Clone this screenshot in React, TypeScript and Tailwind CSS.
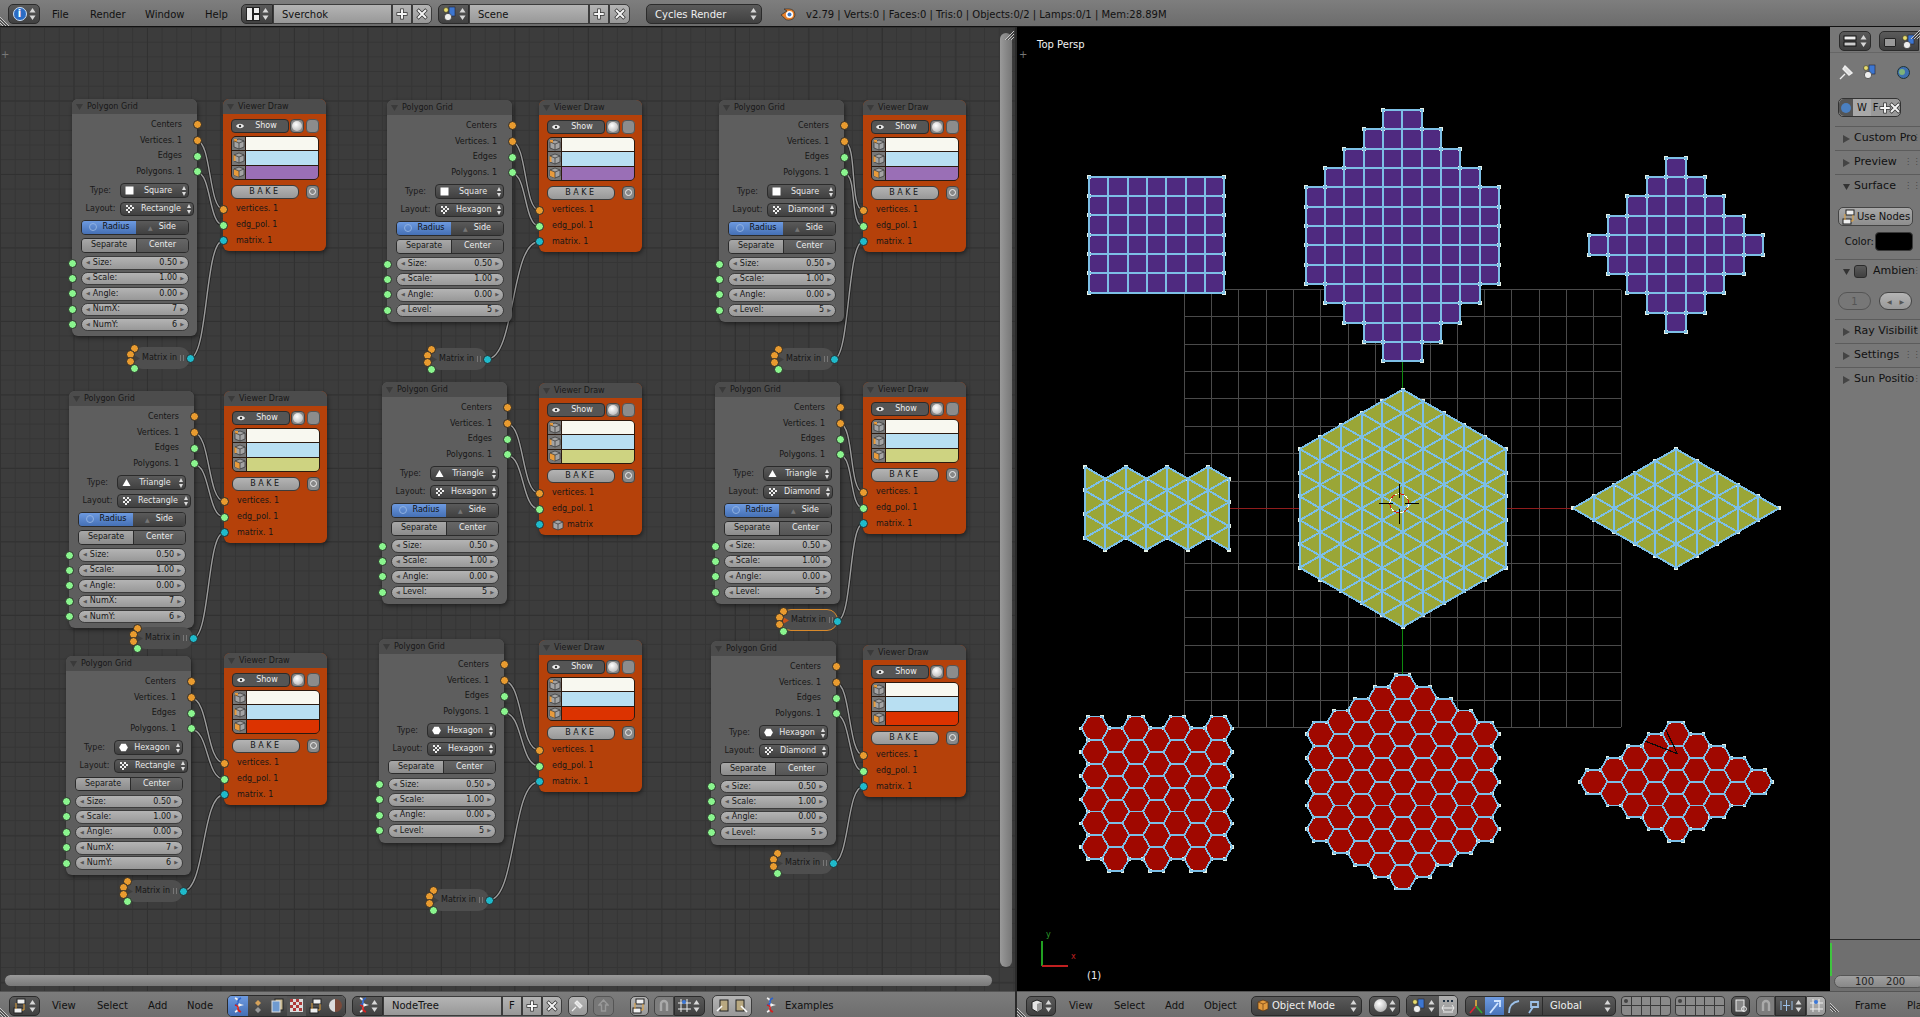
import type { ReactNode } from "react";

// ---------- small helpers ----------
const hexPts = (cx: number, cy: number, r = 13.72) =>
  [0, 60, 120, 180, 240, 300]
    .map((a) => `${(cx + r * Math.cos((a * Math.PI) / 180)).toFixed(1)},${(cy + r * Math.sin((a * Math.PI) / 180)).toFixed(1)}`)
    .join(" ");

function Arrows({ light = true }: { light?: boolean }) {
  const c = light ? "#d8d8d8" : "#333";
  return (
    <svg width="7" height="14" viewBox="0 0 7 14" className="shrink-0">
      <path d="M3.5 1 L6.5 5.5 H0.5 Z" fill={c} />
      <path d="M3.5 13 L6.5 8.5 H0.5 Z" fill={c} />
    </svg>
  );
}

function Corner({ flip = false }: { flip?: boolean }) {
  return (
    <svg width="12" height="12" viewBox="0 0 12 12" className={`shrink-0 ${flip ? "-scale-x-100" : ""}`}>
      <path d="M0 3 L9 12 M0 6 L6 12 M0 9 L3 12" stroke="#c8c8c8" strokeWidth="1" />
      <path d="M0 4.5 L7.5 12 M0 7.5 L4.5 12" stroke="#3a3a3a" strokeWidth="1" />
    </svg>
  );
}

function Plus() {
  return (
    <svg width="14" height="14" viewBox="0 0 14 14" className="shrink-0">
      <path d="M7 1.5 V12.5 M1.5 7 H12.5" stroke="#333" strokeWidth="3.4" />
      <path d="M7 2.2 V11.8 M2.2 7 H11.8" stroke="#f4f4f4" strokeWidth="2" />
    </svg>
  );
}

function Cross() {
  return (
    <svg width="14" height="14" viewBox="0 0 14 14" className="shrink-0">
      <path d="M2.5 2.5 L11.5 11.5 M11.5 2.5 L2.5 11.5" stroke="#333" strokeWidth="3.4" />
      <path d="M3 3 L11 11 M11 3 L3 11" stroke="#f4f4f4" strokeWidth="2" />
    </svg>
  );
}

function TreeIcon() {
  return (
    <svg width="12" height="17" viewBox="0 0 12 17">
      <path d="M3 1 C10 4 2 6 9 8 C2 10 10 12 3 15" stroke="#f2f2f2" strokeWidth="1.8" fill="none" />
      <path d="M9 1 C2 4 10 6 3 8" stroke="#2d62c8" strokeWidth="1.8" fill="none" />
      <path d="M3 8 C10 10 2 12 9 15" stroke="#d22222" strokeWidth="1.8" fill="none" />
    </svg>
  );
}

function NodesIcon() {
  return (
    <svg width="14" height="16" viewBox="0 0 14 16" className="shrink-0">
      <rect x="4" y="1" width="8" height="5" fill="#eee" stroke="#222" />
      <rect x="1" y="10" width="8" height="5" fill="#eee" stroke="#222" />
      <path d="M3 5 V11 M11 6 V12 H9" stroke="#e3a23b" fill="none" />
    </svg>
  );
}

function SceneIcon() {
  return (
    <svg width="15" height="16" viewBox="0 0 15 16" className="shrink-0">
      <rect x="7" y="1" width="6" height="9" fill="#3d76d0" stroke="#223" strokeWidth="0.6" />
      <circle cx="4" cy="4" r="2.4" fill="#e8dc70" stroke="#332" strokeWidth="0.6" />
      <circle cx="6" cy="11" r="3.6" fill="#eee" stroke="#222" strokeWidth="0.6" />
    </svg>
  );
}

// gray cube, a different facet picked out in orange on each row
function Cube({ facet = -1 }: { facet?: number }) {
  return (
    <svg width="12" height="12" viewBox="0 0 12 12">
      <path d="M6 1 L11 3 V9 L6 11 L1 9 V3 Z" fill="#a4a4a4" stroke="#333" strokeWidth="0.7" />
      {facet === 0 && <path d="M1 1 H4 V4 H1 Z" fill="#e89b3c" />}
      {facet === 1 && <path d="M0.5 3 H2.5 V9 H0.5 Z" fill="#e89b3c" />}
      {facet === 2 && <path d="M1 3 L6 5 V11 L1 9 Z" fill="#e89b3c" />}
      <path d="M1 3 L6 5 L11 3 M6 5 V11" stroke="#333" strokeWidth="0.7" fill="none" />
    </svg>
  );
}

const darkPill = "bg-gradient-to-b from-[#5a5a5a] to-[#404040] border border-[#2b2b2b]";
const lightPill = "bg-gradient-to-b from-[#b4b4b4] to-[#989898] border border-[#3c3c3c]";

function BarIcon({ children, w = 20, cls = "" }: { children?: ReactNode; w?: number; cls?: string }) {
  return (
    <div className={`h-[20px] flex items-center justify-center shrink-0 ${cls}`} style={{ width: w }}>
      {children}
    </div>
  );
}

function MenuItem({ label, w }: { label: string; w: number }) {
  return (
    <span className="text-[10px] text-[#111] shrink-0" style={{ width: w }}>
      {label}
    </span>
  );
}

// ---------- node editor ----------
type Poly = {
  x: number;
  y: number;
  kind: "Square" | "Triangle" | "Hexagon";
  layout: "Rectangle" | "Hexagon" | "Diamond";
  vx: number;
  vy: number;
  mx?: number;
  my?: number;
  sel?: boolean;
};

const NODES: Poly[] = [
  { x: 72, y: 99, kind: "Square", layout: "Rectangle", vx: 223, vy: 99, mx: 190, my: 358 },
  { x: 387, y: 100, kind: "Square", layout: "Hexagon", vx: 539, vy: 100, mx: 487, my: 359 },
  { x: 719, y: 100, kind: "Square", layout: "Diamond", vx: 863, vy: 100, mx: 834, my: 359 },
  { x: 69, y: 391, kind: "Triangle", layout: "Rectangle", vx: 224, vy: 391, mx: 193, my: 638 },
  { x: 382, y: 382, kind: "Triangle", layout: "Hexagon", vx: 539, vy: 383 },
  { x: 715, y: 382, kind: "Triangle", layout: "Diamond", vx: 863, vy: 382, mx: 838, my: 620, sel: true },
  { x: 66, y: 656, kind: "Hexagon", layout: "Rectangle", vx: 224, vy: 653, mx: 183, my: 891 },
  { x: 379, y: 639, kind: "Hexagon", layout: "Hexagon", vx: 539, vy: 640, mx: 489, my: 900 },
  { x: 711, y: 641, kind: "Hexagon", layout: "Diamond", vx: 863, vy: 645, mx: 833, my: 863 },
];

const THIRD = { Square: "bg-[#9a6fb6]", Triangle: "bg-[#ced381]", Hexagon: "bg-[#dc3300]" };

function Socket({ color, cls = "" }: { color: string; cls?: string }) {
  return <span className={`absolute w-[9px] h-[9px] rounded-full border border-[#2a2a2a] ${color} ${cls}`} />;
}
const ORANGE = "bg-[#e99b2f]";
const GREEN = "bg-[#8af58e]";
const CYAN = "bg-[#1fbacb]";

function TypeGlyph({ kind }: { kind: Poly["kind"] }) {
  return (
    <svg width="9" height="9" viewBox="0 0 9 9" className="shrink-0">
      {kind === "Square" && <rect x="0.5" y="0.5" width="8" height="8" fill="#fff" />}
      {kind === "Triangle" && <path d="M4.5 1 L8.5 8 H0.5 Z" fill="#fff" />}
      {kind === "Hexagon" && <polygon points={hexPts(4.5, 4.5, 4.4)} fill="#fff" />}
    </svg>
  );
}

function LayoutGlyph() {
  return (
    <svg width="10" height="9" viewBox="0 0 10 9" className="shrink-0">
      <path d="M1 1h2v2H1zM5 1h2v2H5zM3 3h2v2H3zM7 3h2v2H7zM1 5h2v2H1zM5 5h2v2H5zM3 7h2v2H3z" fill="#eee" />
    </svg>
  );
}

function Field({ label, value }: { label: string; value: string }) {
  return (
    <div className="relative h-[13.5px]">
      <Socket color={GREEN} cls="left-[-13.5px] top-[2.2px]" />
      <div className={`h-full rounded-[7px] flex items-center justify-between pl-[4px] pr-[4px] text-[8px] text-[#161616] ${lightPill}`}>
        <span className="flex items-center gap-[3px]">
          <span className="text-[5px] text-[#555]">◀</span>
          {label}
        </span>
        <span className="flex items-center gap-[3px]">
          {value}
          <span className="text-[5px] text-[#555]">▶</span>
        </span>
      </div>
    </div>
  );
}

function DropRow({ label, value, icon }: { label: string; value: string; icon: ReactNode }) {
  return (
    <div className="flex items-center h-[14.5px]">
      <span className="w-[39px] text-center text-[8px] text-[#1a1a1a] shrink-0">{label}</span>
      <div className={`flex-1 h-full rounded-[4px] flex items-center pl-[4px] pr-[2px] gap-[6px] text-[8px] text-[#e8e8e8] ${darkPill}`}>
        {icon}
        <span className="flex-1 text-center whitespace-nowrap">{value}</span>
        <svg width="4" height="10" viewBox="0 0 4 10" className="shrink-0">
          <path d="M2 0 L4 4 H0 Z M2 10 L4 6 H0 Z" fill="#ddd" />
        </svg>
      </div>
    </div>
  );
}

function NodeTitle({ title }: { title: string }) {
  return (
    <div className="h-[15px] flex items-center pl-[4px] gap-[4px] text-[8px] text-[#181818] bg-[#4c4c4c] rounded-t-[6px]">
      <svg width="7" height="6" viewBox="0 0 7 6">
        <path d="M0 0 H7 L3.5 6 Z" fill="#3a3a3a" />
      </svg>
      {title}
    </div>
  );
}

function PolyNode({ n }: { n: Poly }) {
  const fields =
    n.layout === "Rectangle"
      ? [["Size:", "0.50"], ["Scale:", "1.00"], ["Angle:", "0.00"], ["NumX:", "7"], ["NumY:", "6"]]
      : [["Size:", "0.50"], ["Scale:", "1.00"], ["Angle:", "0.00"], ["Level:", "5"]];
  const outs = ["Centers", "Vertices. 1", "Edges", "Polygons. 1"];
  return (
    <div
      className="absolute w-[125px] rounded-[6px] bg-[#5e5e5e] shadow-[1px_2px_4px_rgba(0,0,0,0.45)]"
      style={{ left: n.x, top: n.y - 27 }}
    >
      <NodeTitle title="Polygon Grid" />
      <div className="pt-[3px]">
        {outs.map((o, i) => (
          <div key={o} className="relative h-[15.7px] flex items-center justify-end pr-[15px] text-[8px] text-[#161616]">
            {o}
            <Socket color={i < 2 ? ORANGE : GREEN} cls="right-[-4.5px] top-[3.3px]" />
          </div>
        ))}
      </div>
      <div className="pl-[9px] pr-[8px] pb-[5px] pt-[3.5px] flex flex-col">
        <DropRow label="Type:" value={n.kind} icon={<TypeGlyph kind={n.kind} />} />
        <div className="mt-[3.8px]">
          <DropRow label="Layout:" value={n.layout} icon={<LayoutGlyph />} />
        </div>
        {n.kind !== "Hexagon" && (
          <div className="mt-[4px] h-[14.5px] flex rounded-[4px] overflow-hidden border border-[#2b2b2b] text-[8px]">
            <div className="w-[54px] flex items-center justify-center gap-[6px] bg-gradient-to-b from-[#6d9ae0] to-[#4570b5] text-[#111]">
              <span className="w-[8px] h-[8px] rounded-full border border-[#8fb0e0]" />
              Radius
            </div>
            <div className="flex-1 flex items-center justify-center gap-[6px] bg-gradient-to-b from-[#5a5a5a] to-[#404040] text-[#eee]">
              <span className="text-[6px] text-[#777]">▲</span>
              Side
            </div>
          </div>
        )}
        <div className="mt-[3.5px] h-[14.5px] flex rounded-[4px] overflow-hidden border border-[#2b2b2b] text-[8px]">
          <div className="w-[54px] flex items-center justify-center bg-gradient-to-b from-[#a8a8a8] to-[#8c8c8c] text-[#161616]">
            Separate
          </div>
          <div className="flex-1 flex items-center justify-center bg-gradient-to-b from-[#666] to-[#555] text-[#eee] border-l border-[#2b2b2b]">
            Center
          </div>
        </div>
        <div className="mt-[3.8px] flex flex-col gap-[1.9px]">
          {fields.map(([a, b]) => (
            <Field key={a} label={a} value={b} />
          ))}
        </div>
      </div>
    </div>
  );
}

function ViewerNode({ n }: { n: Poly }) {
  const linked = n.mx !== undefined;
  const rows: [string, string][] = [
    ["vertices. 1", ORANGE],
    ["edg_pol. 1", GREEN],
    [linked ? "matrix. 1" : "matrix", CYAN],
  ];
  return (
    <div
      className="absolute w-[103px] rounded-[6px] bg-[#b5410a] shadow-[1px_2px_4px_rgba(0,0,0,0.45)]"
      style={{ left: n.vx, top: n.vy - 27 }}
    >
      <NodeTitle title="Viewer Draw" />
      <div className="pl-[8px] pr-[7px] pt-[5px]">
        <div className="flex gap-[1px] h-[14px]">
          <div className="w-[58px] rounded-[4px] bg-[#555] border border-[#2b2b2b] flex items-center pl-[4px] text-[8px] text-[#eee]">
            <svg width="8" height="6" viewBox="0 0 8 6">
              <path d="M0 3 C2 0 6 0 8 3 C6 6 2 6 0 3Z" fill="#eee" />
              <circle cx="4" cy="3" r="1.2" fill="#333" />
            </svg>
            <span className="flex-1 text-center">Show</span>
          </div>
          <div className="w-[14px] rounded-[4px] bg-[#888] border border-[#444] flex items-center justify-center">
            <span className="w-[10px] h-[10px] rounded-full bg-[radial-gradient(circle_at_40%_35%,#fff,#aaa)]" />
          </div>
          <div className="w-[13px] ml-[1px] rounded-[4px] bg-[#8c8c8c] border border-[#555]" />
        </div>
        <div className="mt-[3px] h-[44px] rounded-[5px] overflow-hidden border border-[#2b1a10] flex flex-col gap-[1px] bg-[#2b1a10]">
          {["bg-[#f8f8f0]", "bg-[#b8dff2]", THIRD[n.kind]].map((c, i) => (
            <div key={c} className="flex-1 flex gap-[1px]">
              <div className="w-[13px] bg-[#777] flex items-center justify-center">
                <Cube facet={i} />
              </div>
              <div className={`flex-1 ${c}`} />
            </div>
          ))}
        </div>
        <div className="mt-[5px] flex justify-between h-[13.5px]">
          <div className={`w-[68px] rounded-[6px] flex items-center justify-center text-[8px] tracking-[2.5px] text-[#161616] ${lightPill}`}>
            BAKE
          </div>
          <div className="w-[13px] rounded-[4px] bg-[#888] border border-[#444] flex items-center justify-center">
            <span className="w-[7px] h-[7px] rounded-full border border-[#eee]" />
          </div>
        </div>
      </div>
      <div className="pt-[3px] pb-[2px]">
        {rows.map(([t, c]) => (
          <div key={t} className="relative h-[15.8px] flex items-center pl-[13px] text-[8px] text-[#161616]">
            <Socket color={c} cls="left-[-4.5px] top-[3.4px]" />
            {t === "matrix" && (
              <span className="mr-[3px]">
                <Cube />
              </span>
            )}
            {t}
          </div>
        ))}
      </div>
    </div>
  );
}

function MatrixNode({ n }: { n: Poly }) {
  return (
    <div
      className={`absolute w-[58px] h-[22px] rounded-[11px] bg-[#4e4e4e] flex items-center pl-[2px] text-[8px] text-[#161616] ${n.sel ? "border border-[#d98a2b]" : ""}`}
      style={{ left: n.mx! - 58, top: n.my! - 38 }}
    >
      <svg width="6" height="7" viewBox="0 0 6 7" className="mr-[2px] shrink-0">
        <path d="M0 0 L6 3.5 L0 7 Z" fill={n.sel ? "#c7541a" : "#3f3f3f"} />
      </svg>
      <span className="whitespace-nowrap">Matrix in</span>
      <span className="ml-[3px] w-[4px] h-[6px] border-x border-[#777] shrink-0" />
      <Socket color={ORANGE} cls="left-[-2px] top-[-3px]" />
      <Socket color={ORANGE} cls="left-[-6px] top-[3px]" />
      <Socket color={ORANGE} cls="left-[-6px] top-[10px]" />
      <Socket color={GREEN} cls="left-[-2px] top-[17px]" />
      <Socket color={CYAN} cls="right-[-4.5px] top-[6.5px]" />
    </div>
  );
}

function wire(x1: number, y1: number, x2: number, y2: number) {
  const d = Math.max(Math.abs(x2 - x1) * 0.55, 14);
  return `M${x1} ${y1} C${x1 + d} ${y1} ${x2 - d} ${y2} ${x2} ${y2}`;
}

function Wires() {
  const paths: string[] = [];
  NODES.forEach((n) => {
    paths.push(wire(n.x + 125, n.y + 42, n.vx, n.vy + 110));
    paths.push(wire(n.x + 125, n.y + 73.5, n.vx, n.vy + 126));
    if (n.mx !== undefined) paths.push(wire(n.mx, n.my!, n.vx, n.vy + 141.7));
  });
  return (
    <svg className="absolute inset-0 w-full h-full" viewBox="0 27 1015 964">
      {paths.map((d, i) => (
        <path key={i} d={d} fill="none" stroke="#222" strokeWidth="3.2" />
      ))}
      {paths.map((d, i) => (
        <path key={i} d={d} fill="none" stroke="#9c9c9c" strokeWidth="1.4" />
      ))}
    </svg>
  );
}

function NodeEditor() {
  return (
    <div className="relative flex-1 overflow-hidden bg-[#3c3c3c] bg-[linear-gradient(#313131_1px,transparent_1px),linear-gradient(90deg,#313131_1px,transparent_1px),linear-gradient(#353535_1px,transparent_1px),linear-gradient(90deg,#353535_1px,transparent_1px)] bg-[size:73.5px_73.5px,73.5px_73.5px,14.7px_14.7px,14.7px_14.7px]">
      <Wires />
      {NODES.map((n, i) => (
        <div key={i}>
          <PolyNode n={n} />
          <ViewerNode n={n} />
          {n.mx !== undefined && <MatrixNode n={n} />}
        </div>
      ))}
      <span className="absolute left-[1px] top-[23px] text-[10px] leading-none text-[#777]">+</span>
      <div className="absolute right-[3px] top-[6px] bottom-[24px] w-[12px] rounded-[6px] bg-gradient-to-r from-[#9a9a9a] to-[#777]" />
      <div className="absolute left-[5px] right-[23px] bottom-[5px] h-[11px] rounded-[6px] bg-gradient-to-b from-[#9a9a9a] to-[#787878]" />
      <div className="absolute right-[1px] top-[1px]">
        <Corner flip />
      </div>
    </div>
  );
}

function NodeHeader() {
  return (
    <div className="h-[26px] relative flex items-center pl-[9px] pt-[2px] border-t border-[#555] bg-gradient-to-b from-[#7c7c7c] to-[#6e6e6e]">
      <div className="absolute left-0 bottom-0">
        <Corner />
      </div>
      <BarIcon w={31} cls={`rounded-[5px] gap-[2px] ${darkPill}`}>
        <NodesIcon />
        <Arrows />
      </BarIcon>
      <span className="w-[12px]" />
      <MenuItem label="View" w={45} />
      <MenuItem label="Select" w={51} />
      <MenuItem label="Add" w={39} />
      <MenuItem label="Node" w={40} />
      <div className="flex rounded-[5px] overflow-hidden border border-[#2b2b2b]">
        <BarIcon w={20} cls="bg-gradient-to-b from-[#6d9ae0] to-[#4570b5]">
          <TreeIcon />
        </BarIcon>
        <BarIcon w={19.4} cls="bg-gradient-to-b from-[#5a5a5a] to-[#404040]">
          <svg width="12" height="14" viewBox="0 0 12 14">
            <path d="M6 1 L9 4 L6 7 L3 4 Z" fill="#d5a25a" />
            <path d="M6 8 L9 11 L6 14 L3 11 Z" fill="#999" />
          </svg>
        </BarIcon>
        <BarIcon w={19.4} cls="bg-gradient-to-b from-[#5a5a5a] to-[#404040]">
          <svg width="13" height="15" viewBox="0 0 13 15">
            <rect x="4" y="1" width="8" height="11" fill="#c8b890" stroke="#222" />
            <rect x="1" y="3" width="8" height="11" fill="#6f9ad0" stroke="#ddd" />
          </svg>
        </BarIcon>
        <BarIcon w={19.4} cls="bg-[#555]">
          <svg width="13" height="13" viewBox="0 0 13 13">
            <rect width="13" height="13" fill="#ddd" />
            <path d="M0 0h3v3H0zM6 0h3v3H6zM3 3h3v3H3zM9 3h3v3H9zM0 6h3v3H0zM6 6h3v3H6zM3 9h3v3H3zM9 9h3v3H9z" fill="#b03a3a" />
          </svg>
        </BarIcon>
        <BarIcon w={19.4} cls="bg-gradient-to-b from-[#5a5a5a] to-[#404040]">
          <NodesIcon />
        </BarIcon>
        <BarIcon w={19.4} cls="bg-gradient-to-b from-[#5a5a5a] to-[#404040]">
          <span className="w-[13px] h-[13px] rounded-full bg-[linear-gradient(90deg,#ddd_50%,#7a4a3a_50%)]" />
        </BarIcon>
      </div>
      <span className="w-[6px]" />
      <BarIcon w={31} cls={`rounded-l-[5px] gap-[2px] ${darkPill}`}>
        <TreeIcon />
        <Arrows />
      </BarIcon>
      <div className={`w-[119px] h-[20px] flex items-center pl-[8px] text-[10px] text-[#111] ${lightPill}`}>NodeTree</div>
      <BarIcon w={20} cls={`text-[10px] text-[#111] ${lightPill}`}>F</BarIcon>
      <BarIcon w={20} cls={lightPill}><Plus /></BarIcon>
      <BarIcon w={20} cls={`rounded-r-[5px] ${lightPill}`}><Cross /></BarIcon>
      <span className="w-[6px]" />
      <BarIcon w={20} cls={`rounded-[5px] ${lightPill}`}>
        <svg width="13" height="13" viewBox="0 0 13 13">
          <path d="M1 12 L5 8 M4 4 L9 9 M6 2 L11 7 L9 9 L4 4 Z" stroke="#eee" fill="#ddd" strokeWidth="1.2" />
        </svg>
      </BarIcon>
      <span className="w-[5px]" />
      <BarIcon w={21} cls="rounded-[5px] bg-[#777] border border-[#555]">
        <svg width="11" height="13" viewBox="0 0 11 13">
          <path d="M5.5 1 L10 6 H7.5 V12 H3.5 V6 H1 Z" stroke="#999" fill="none" strokeWidth="1.4" />
        </svg>
      </BarIcon>
      <span className="w-[16px]" />
      <BarIcon w={19} cls={`rounded-[5px] ${lightPill}`}>
        <NodesIcon />
      </BarIcon>
      <span className="w-[5px]" />
      <BarIcon w={20} cls="rounded-l-[5px] bg-[#7d7d7d] border border-[#444]">
        <svg width="12" height="13" viewBox="0 0 12 13">
          <path d="M3 12 V5 A3 3 0 0 1 9 5 V12" stroke="#aaa" strokeWidth="2.4" fill="none" />
        </svg>
      </BarIcon>
      <BarIcon w={31} cls={`rounded-r-[5px] gap-[2px] ${darkPill}`}>
        <svg width="13" height="13" viewBox="0 0 13 13">
          <path d="M3 0 V13 M9 0 V13 M0 4 H13 M0 10 H13" stroke="#eee" />
          <circle cx="6" cy="3" r="2" fill="#3b78d8" />
        </svg>
        <Arrows />
      </BarIcon>
      <span className="w-[7px]" />
      <div className={`flex rounded-[5px] overflow-hidden ${lightPill}`}>
        <BarIcon w={19}>
          <svg width="13" height="15" viewBox="0 0 13 15">
            <rect x="4" y="2" width="8" height="11" fill="#b8a880" stroke="#222" />
            <path d="M1 13 L6 8" stroke="#fff" strokeWidth="1.6" />
          </svg>
        </BarIcon>
        <BarIcon w={19}>
          <svg width="13" height="15" viewBox="0 0 13 15">
            <rect x="1" y="2" width="8" height="11" fill="#b8a880" stroke="#222" />
            <path d="M6 8 L12 14" stroke="#fff" strokeWidth="1.6" />
          </svg>
        </BarIcon>
      </div>
      <span className="w-[11px]" />
      <span className="w-[14px] flex justify-center"><TreeIcon /></span>
      <span className="w-[8px]" />
      <span className="text-[10px] text-[#111]">Examples</span>
    </div>
  );
}

// ---------- 3D view ----------
type V = { c: number; k: number };

function triMesh(verts: V[], X: number, Y: number) {
  const has = new Set(verts.map((v) => `${v.c}:${v.k}`));
  const p = (v: V) => [X + v.c * 20.59, Y + v.k * 11.875] as const;
  const lines: [number, number, number, number][] = [];
  verts.forEach((v) => {
    [[0, 2], [1, 1], [1, -1]].forEach(([dc, dk]) => {
      if (has.has(`${v.c + dc}:${v.k + dk}`)) {
        const a = p(v);
        const b = p({ c: v.c + dc, k: v.k + dk });
        lines.push([a[0], a[1], b[0], b[1]]);
      }
    });
  });
  // only vertices on the rim stand out of the blue wires
  const rim = verts.filter((v) =>
    [[0, 2], [0, -2], [1, 1], [1, -1], [-1, 1], [-1, -1]].some(([dc, dk]) => !has.has(`${v.c + dc}:${v.k + dk}`)),
  );
  return { lines, pts: rim.map(p) };
}

function range(a: number, b: number, s = 1) {
  const out: number[] = [];
  for (let i = a; i <= b; i += s) out.push(i);
  return out;
}

function Mesh({ fill, outline, verts, X, Y }: { fill: string; outline: string; verts: V[]; X: number; Y: number }) {
  const m = triMesh(verts, X, Y);
  return (
    <g>
      <polygon points={outline} fill={fill} />
      {m.pts.map(([x, y], i) => (
        <rect key={i} x={x - 2} y={y - 2} width="4" height="4" fill="#e6f2e8" />
      ))}
      {m.lines.map(([a, b, c, d], i) => (
        <line key={i} x1={a} y1={b} x2={c} y2={d} stroke="#7dbfe6" strokeWidth="2" />
      ))}
    </g>
  );
}

function Squares({ rows, x0, y0, cell }: { rows: [number, number][]; x0: number; y0: number; cell: number }) {
  // each row: first column index and number of cells
  return (
    <g>
      {rows.map(([s, n], r) => (
        <rect key={r} x={x0 + s * cell} y={y0 + r * cell} width={n * cell} height={cell} fill="#4f2a80" />
      ))}
      {rows.map(([s, n], r) =>
        [0, n].flatMap((c) =>
          [0, 1].map((d) => (
            <rect key={`${r}-${c}-${d}`} x={x0 + (s + c) * cell - 2} y={y0 + (r + d) * cell - 2} width="4" height="4" fill="#e6f2e8" />
          )),
        ),
      )}
      {rows.map(([s, n], r) =>
        range(0, n - 1).map((c) => (
          <rect key={`${r}:${c}`} x={x0 + (s + c) * cell} y={y0 + r * cell} width={cell} height={cell} fill="none" stroke="#7dbfe6" strokeWidth="2" />
        )),
      )}
    </g>
  );
}

function HexCells({ cells }: { cells: [number, number][] }) {
  const R = 13.72;
  const corners = cells.flatMap(([x, y]) =>
    [0, 60, 120, 180, 240, 300].map((a) => [x + R * Math.cos((a * Math.PI) / 180), y + R * Math.sin((a * Math.PI) / 180)] as const),
  );
  // a corner shared by three cells sits inside the patch and shows no vertex
  const rim = corners.filter(([x, y]) => cells.filter(([a, b]) => Math.hypot(a - x, b - y) < R + 1).length < 3);
  return (
    <g>
      {cells.map(([x, y], i) => (
        <polygon key={i} points={hexPts(x, y)} fill="#a00800" />
      ))}
      {rim.map(([x, y], i) => (
        <rect key={i} x={x - 1.8} y={y - 1.8} width="3.6" height="3.6" fill="#e6f2e8" />
      ))}
      {cells.map(([x, y], i) => (
        <polygon key={i} points={hexPts(x, y)} fill="none" stroke="#7dbfe6" strokeWidth="1.8" />
      ))}
    </g>
  );
}

function Viewport() {
  const gx = range(0, 16).map((i) => 1184.3 + i * 27.3);
  const gy = range(0, 16).map((i) => 289.5 + i * 27.37);

  const rectRows: [number, number][] = range(0, 5).map(() => [0, 7]);
  const roundRows: [number, number][] = [2, 4, 6, 8, 10, 10, 10, 10, 10, 8, 6, 4, 2].map((n) => [(10 - n) / 2, n]);
  const diamondRows: [number, number][] = [1, 3, 5, 7, 9, 7, 5, 3, 1].map((n) => [(9 - n) / 2, n]);

  const zig: V[] = range(0, 7).flatMap((c) => [0, 2, 4, 6].map((k) => ({ c, k: k + (c % 2) })));
  const zigTop = range(0, 7).map((c) => `${1084.7 + c * 20.59},${466.7 + (c % 2) * 11.875}`);
  const zigBot = range(0, 7).reverse().map((c) => `${1084.7 + c * 20.59},${466.7 + (6 + c % 2) * 11.875}`);

  const hexV: V[] = range(-5, 5).flatMap((c) => range(-(10 - Math.abs(c)), 10 - Math.abs(c), 2).map((k) => ({ c, k })));
  const rhV: V[] = range(-5, 5).flatMap((c) => range(-(5 - Math.abs(c)), 5 - Math.abs(c), 2).map((k) => ({ c, k })));

  const cellsRect: [number, number][] = range(0, 6).flatMap((i) =>
    range(0, 5).map((j) => [1095 + i * 20.57, 728.3 + j * 23.75 + (i % 2) * 11.875] as [number, number]),
  );
  const cellsHex: [number, number][] = range(-4, 4).flatMap((c) =>
    range(-(8 - Math.abs(c)), 8 - Math.abs(c), 2).map((k) => [1402.7 + c * 20.57, 781.7 + k * 11.875] as [number, number]),
  );
  const cellsDia: [number, number][] = range(-4, 4).flatMap((c) =>
    range(-(4 - Math.abs(c)), 4 - Math.abs(c), 2).map((k) => [1676 + c * 20.57, 781.7 + k * 11.875] as [number, number]),
  );

  return (
    <div className="relative flex-1 bg-black overflow-hidden">
      <svg className="absolute inset-0 w-full h-full" viewBox="1017 27 813 964" shapeRendering="crispEdges">
        {gx.map((x) => (
          <line key={x} x1={x} y1={289.5} x2={x} y2={727.4} stroke="#4a4a4a" />
        ))}
        {gy.map((y) => (
          <line key={y} x1={1184.3} y1={y} x2={1621} y2={y} stroke="#4a4a4a" />
        ))}
        <line x1={1184.3} y1={508.3} x2={1621} y2={508.3} stroke="#8f1c1c" />
        <line x1={1402.7} y1={289.5} x2={1402.7} y2={727.4} stroke="#0e8a0e" />

        <Squares rows={rectRows} x0={1089} y0={176.7} cell={19.33} />
        <Squares rows={roundRows} x0={1305.7} y0={110} cell={19.34} />
        <Squares rows={diamondRows} x0={1588.7} y0={157.7} cell={19.38} />

        <Mesh fill="#9aa637" outline={[...zigTop, ...zigBot].join(" ")} verts={zig} X={1084.7} Y={466.7} />
        <Mesh
          fill="#9aa637"
          outline="1402.7,389.6 1505.6,449 1505.6,567.6 1402.7,627 1299.8,567.6 1299.8,449"
          verts={hexV}
          X={1402.7}
          Y={508.3}
        />
        <Mesh fill="#9aa637" outline="1573,508.3 1676,448.9 1779,508.3 1676,567.7" verts={rhV} X={1676} Y={508.3} />

        <HexCells cells={cellsRect} />
        <HexCells cells={cellsHex} />
        <HexCells cells={cellsDia} />
        <path d="M1645 741 L1677.3 753.7 L1666 730" fill="none" stroke="#0a0a0a" strokeWidth="1.2" />

        {/* 3d cursor */}
        <circle cx={1399.3} cy={503.3} r={9.5} fill="none" stroke="#fff" strokeDasharray="5 5" />
        <circle cx={1399.3} cy={503.3} r={9.5} fill="none" stroke="#e01010" strokeDasharray="5 5" strokeDashoffset="5" />
        <path d="M1379 503.3 H1393 M1405 503.3 H1419 M1399.3 484 V498 M1399.3 509 V524" stroke="#000" />

        {/* axis widget */}
        <path d="M1042 966 V941" stroke="#22a022" fill="none" strokeWidth="1.2" />
        <path d="M1042 966 H1068" stroke="#c02020" fill="none" strokeWidth="1.2" />
      </svg>
      <span className="absolute left-[20px] top-[10px] text-[10px] text-[#f2f2f2]">Top Persp</span>
      <span className="absolute left-[29px] top-[904px] text-[8px] leading-none text-[#2a9a2a]">y</span>
      <span className="absolute left-[54px] top-[926px] text-[8px] leading-none text-[#c02020]">x</span>
      <span className="absolute left-[70px] top-[944px] text-[10px] leading-none text-[#eee]">(1)</span>
      <span className="absolute left-[2px] top-[23px] text-[10px] leading-none text-[#777]">+</span>
    </div>
  );
}

function ViewHeader() {
  return (
    <div className="h-[26px] relative flex items-center pl-[9px] pt-[2px] border-t border-[#555] bg-gradient-to-b from-[#7c7c7c] to-[#6e6e6e]">
      <div className="absolute left-0 bottom-0">
        <Corner />
      </div>
      <BarIcon w={30} cls={`rounded-[5px] gap-[2px] ${darkPill}`}>
        <svg width="12" height="14" viewBox="0 0 12 14">
          <path d="M6 1 L11 3 V10 L6 13 L1 10 V3 Z" fill="#e5e5e5" stroke="#222" />
          <path d="M6 5 V13 L11 10 V3Z" fill="#999" />
        </svg>
        <Arrows />
      </BarIcon>
      <span className="w-[13px]" />
      <MenuItem label="View" w={45} />
      <MenuItem label="Select" w={51} />
      <MenuItem label="Add" w={39} />
      <MenuItem label="Object" w={47} />
      <div className={`w-[111px] h-[20px] rounded-[5px] flex items-center pl-[5px] pr-[4px] gap-[3px] text-[10px] text-[#eee] ${darkPill}`}>
        <svg width="12" height="13" viewBox="0 0 12 13">
          <path d="M6 1 L11 3 V10 L6 12 L1 10 V3 Z" fill="#e29a3e" stroke="#5a3310" strokeWidth="0.7" />
          <path d="M1 3 L6 5 L11 3 M6 5 V12" stroke="#6b3e14" strokeWidth="0.7" fill="none" />
        </svg>
        <span className="flex-1 whitespace-nowrap">Object Mode</span>
        <Arrows />
      </div>
      <span className="w-[7px]" />
      <BarIcon w={31} cls={`rounded-[5px] gap-[2px] ${darkPill}`}>
        <span className="w-[13px] h-[13px] rounded-full bg-[radial-gradient(circle_at_40%_35%,#fff,#999)]" />
        <Arrows />
      </BarIcon>
      <span className="w-[6px]" />
      <div className="flex rounded-[5px] overflow-hidden border border-[#2b2b2b]">
        <BarIcon w={32} cls="gap-[2px] bg-gradient-to-b from-[#5a5a5a] to-[#404040]">
          <SceneIcon />
          <Arrows />
        </BarIcon>
        <BarIcon w={18} cls="bg-gradient-to-b from-[#aeaeae] to-[#999]">
          <svg width="14" height="14" viewBox="0 0 14 14">
            <path d="M2 2h2M6 2h2M10 2h2" stroke="#234" strokeWidth="2" />
            <path d="M1 9 H13 M3 6 L1 9 L3 12 M11 6 L13 9 L11 12 M2 13 H12" stroke="#eee" fill="none" />
          </svg>
        </BarIcon>
      </div>
      <span className="w-[7px]" />
      <div className={`flex items-stretch h-[20px] rounded-[5px] overflow-hidden ${darkPill}`}>
        <BarIcon w={19}>
          <svg width="14" height="15" viewBox="0 0 14 15">
            <path d="M7 7 L1 14" stroke="#d23" strokeWidth="1.6" />
            <path d="M7 7 L13 14" stroke="#3a3" strokeWidth="1.6" />
            <path d="M7 7 V1" stroke="#e8b040" strokeWidth="1.6" />
          </svg>
        </BarIcon>
        <BarIcon w={19} cls="bg-gradient-to-b from-[#6d9ae0] to-[#4570b5]">
          <svg width="13" height="15" viewBox="0 0 13 15">
            <path d="M2 14 L10 4 M6 2 H12 V8" stroke="#cfe4ff" strokeWidth="1.8" fill="none" />
          </svg>
        </BarIcon>
        <BarIcon w={19}>
          <svg width="13" height="15" viewBox="0 0 13 15">
            <path d="M2 14 C2 7 6 3 12 2" stroke="#9cc0e8" strokeWidth="1.8" fill="none" />
          </svg>
        </BarIcon>
        <BarIcon w={19}>
          <svg width="13" height="15" viewBox="0 0 13 15">
            <path d="M3 14 L7 8 M5 3 H12 V8 H5Z" stroke="#9cc0e8" strokeWidth="1.8" fill="none" />
          </svg>
        </BarIcon>
        <div className="w-[73px] flex items-center pl-[7px] pr-[4px] text-[10px] text-[#eee] border-l border-[#2b2b2b]">
          <span className="flex-1">Global</span>
          <Arrows />
        </div>
      </div>
      <span className="w-[5px]" />
      <Layers />
      <span className="w-[4px]" />
      <Layers />
      <span className="w-[6px]" />
      <BarIcon w={19} cls={`rounded-[5px] ${darkPill}`}>
        <svg width="12" height="14" viewBox="0 0 12 14">
          <rect x="1" y="1" width="8" height="11" fill="#888" stroke="#eee" />
          <circle cx="9" cy="10" r="2.4" fill="none" stroke="#eee" />
        </svg>
      </BarIcon>
      <span className="w-[6px]" />
      <BarIcon w={19} cls="rounded-l-[5px] bg-[#7d7d7d] border border-[#444]">
        <svg width="12" height="13" viewBox="0 0 12 13">
          <path d="M3 12 V5 A3 3 0 0 1 9 5 V12" stroke="#aaa" strokeWidth="2.4" fill="none" />
        </svg>
      </BarIcon>
      <BarIcon w={31} cls={`gap-[2px] ${darkPill}`}>
        <svg width="13" height="11" viewBox="0 0 13 11">
          <path d="M1 1 V10 M12 1 V10 M6.5 0 V11 M3 5.5 H10" stroke="#9cc0e8" />
        </svg>
        <Arrows />
      </BarIcon>
      <BarIcon w={20} cls={`rounded-r-[5px] ${lightPill}`}>
        <svg width="13" height="13" viewBox="0 0 13 13">
          <path d="M3 0 V13 M9 0 V13 M0 4 H13 M0 10 H13" stroke="#eee" />
          <circle cx="6" cy="3" r="2" fill="#3b78d8" />
        </svg>
      </BarIcon>
    </div>
  );
}

function Layers() {
  return (
    <div className="w-[50px] h-[20px] rounded-[4px] overflow-hidden border border-[#3a3a3a] grid grid-cols-5 grid-rows-2 gap-px bg-[#3a3a3a]">
      {range(0, 9).map((i) => (
        <div key={i} className="bg-[#8a8a8a] flex items-center justify-center">
          {i === 0 && <span className="w-[4px] h-[4px] rounded-full bg-[#444]" />}
        </div>
      ))}
    </div>
  );
}

// ---------- right side ----------
function Section({ label, open = false, check = false, dots = true }: { label: string; open?: boolean; check?: boolean; dots?: boolean }) {
  return (
    <div className="relative h-[24px] border-t border-[#5c5c5c] flex items-center pl-[8px] gap-[4px] text-[11px] text-[#111] whitespace-nowrap">
      <svg width="7" height="8" viewBox="0 0 7 8" className="shrink-0">
        {open ? <path d="M0 1 H7 L3.5 7 Z" fill="#333" /> : <path d="M0 0 L7 4 L0 8 Z" fill="#444" />}
      </svg>
      {check && <span className={`w-[13px] h-[13px] rounded-[3px] mr-[2px] ${darkPill}`} />}
      {label}
      {dots && <span className="absolute left-[69px] top-[7px] text-[8px] leading-none tracking-[0.5px] text-[#444]">⋮⋮⋮⋮</span>}
    </div>
  );
}

function Properties() {
  return (
    <div className="relative flex-1 overflow-hidden bg-[#777] pt-[3px]">
      <div className="absolute right-0 top-0">
        <Corner flip />
      </div>
      <div className="h-[23px] flex items-center pl-[9px] gap-[8px] border-b border-[#666]">
        <BarIcon w={32} cls={`rounded-[5px] gap-[3px] ${darkPill}`}>
          <svg width="14" height="12" viewBox="0 0 14 12">
            <rect x="1" y="1" width="12" height="4" fill="#eee" stroke="#111" />
            <rect x="1" y="7" width="12" height="4" fill="#ccc" stroke="#111" />
          </svg>
          <Arrows />
        </BarIcon>
        <div className={`h-[20px] flex rounded-l-[5px] overflow-hidden ${darkPill}`}>
          <BarIcon w={19}>
            <span className="w-[12px] h-[9px] rounded-[1px] bg-[#999] border border-[#222]" />
          </BarIcon>
          <BarIcon w={19}>
            <SceneIcon />
          </BarIcon>
        </div>
      </div>
      <div className="h-[20px] mt-[9px] pl-[8px] flex items-center gap-[8px]">
        <svg width="16" height="16" viewBox="0 0 16 16">
          <path d="M2 15 L7 10 M5 5 L11 11 M7 2 L14 9 L11 11 L5 5 Z" stroke="#eee" fill="#ddd" strokeWidth="1.4" />
        </svg>
        <SceneIcon />
        <span className="w-[4px]" />
        <span className="w-[13px] h-[13px] rounded-full bg-[#3d6fb0] border border-[#233] overflow-hidden">
          <span className="block w-[6px] h-[6px] bg-[#7eb27a] rounded-full ml-[1px] mt-[2px]" />
        </span>
      </div>
      <div className="mt-[16px] ml-[8px] h-[19px] w-[63px] flex rounded-[5px] border border-[#333] bg-[#999] text-[10px] text-[#111]">
        <div className="w-[14px] rounded-l-[5px] bg-[#555] flex items-center justify-center">
          <span className="w-[10px] h-[10px] rounded-full bg-[#4a7fc0]" />
        </div>
        <div className="w-[19px] bg-[#a8a8a8] flex items-center justify-center">W</div>
        <div className="w-[9px] flex items-center justify-center">F</div>
        <div className="w-[10px] flex items-center justify-center"><Plus /></div>
        <div className="w-[10px] flex items-center justify-center"><Cross /></div>
      </div>
      <div className="mt-[9px] mx-[5px] -mr-[10px]">
        <Section label="Custom Pro" />
        <Section label="Preview" />
        <Section label="Surface" open />
      </div>
      <div className="ml-[8px] mt-[9px] w-[75px] h-[19px] rounded-[5px] flex items-center gap-[1px] pl-[3px] text-[10px] text-[#111] bg-gradient-to-b from-[#a8a8a8] to-[#8e8e8e] border border-[#444] whitespace-nowrap">
        <NodesIcon />
        Use Nodes
      </div>
      <div className="ml-[8px] mt-[6px] h-[19px] w-[75px] flex items-center">
        <span className="w-[37px] text-right pr-[1px] text-[10px] text-[#111]">Color:</span>
        <span className="flex-1 h-full rounded-[4px] bg-black border border-[#3a3a3a]" />
      </div>
      <div className="mt-[8px] mx-[5px] -mr-[10px]">
        <Section label="Ambien" open check />
      </div>
      <div className="ml-[8px] mt-[9px] flex gap-[8px] h-[18px] text-[10px]">
        <div className="w-[33px] rounded-[9px] border border-[#555] bg-[#777] flex items-center justify-center text-[#555]">1</div>
        <div className="w-[33px] rounded-[9px] bg-gradient-to-b from-[#b4b4b4] to-[#999] border border-[#444] flex items-center justify-center gap-[8px] text-[6px] text-[#555]">
          <span>◀</span>
          <span>▶</span>
        </div>
      </div>
      <div className="mt-[9px] mx-[5px] -mr-[10px]">
        <Section label="Ray Visibilit" />
        <Section label="Settings" />
        <Section label="Sun Positio" />
      </div>
    </div>
  );
}

function Timeline() {
  return (
    <div className="relative h-[52px] bg-[#6f6f6f] border-t border-[#2a2a2a]">
      <div className="absolute left-0 top-[3px] h-[33px] w-[2px] bg-[#3fc53f]" />
      <div className="absolute left-[4px] right-[-4px] bottom-[3px] h-[13px] rounded-[7px] bg-gradient-to-b from-[#a0a0a0] to-[#888] border border-[#555] flex items-center pl-[20px] gap-[12px] text-[10px] text-[#222]">
        <span>100</span>
        <span>200</span>
      </div>
    </div>
  );
}

function TimelineHeader() {
  return (
    <div className="h-[26px] relative flex items-center pt-[2px] border-t border-[#555] bg-gradient-to-b from-[#7c7c7c] to-[#6e6e6e] overflow-hidden whitespace-nowrap text-[10px] text-[#111]">
      <Corner />
      <span className="ml-[13px] w-[52px] shrink-0">Frame</span>
      <span className="shrink-0">Playback</span>
    </div>
  );
}

// ---------- top bar ----------
function TopBar() {
  return (
    <div className="h-[27px] shrink-0 relative flex items-center pl-[8px] pt-[2px] border-b border-[#111] bg-gradient-to-b from-[#7e7e7e] to-[#6c6c6c]">
      <div className="absolute left-0 bottom-0">
        <Corner />
      </div>
      <BarIcon w={32} cls={`rounded-[5px] gap-[2px] ${darkPill}`}>
        <span className="w-[14px] h-[14px] rounded-full bg-[#2b6cc4] border border-[#cfe0f5] flex items-center justify-center text-[10px] leading-none font-bold text-white">i</span>
        <Arrows />
      </BarIcon>
      <span className="w-[12px]" />
      <MenuItem label="File" w={38} />
      <MenuItem label="Render" w={55} />
      <MenuItem label="Window" w={60} />
      <MenuItem label="Help" w={36} />
      <BarIcon w={32} cls={`rounded-l-[5px] gap-[2px] ${darkPill}`}>
        <svg width="14" height="14" viewBox="0 0 14 14">
          <rect x="0.5" y="0.5" width="6" height="13" fill="#eee" stroke="#222" />
          <rect x="7.5" y="0.5" width="6" height="6" fill="#eee" stroke="#222" />
          <rect x="7.5" y="7.5" width="6" height="6" fill="#eee" stroke="#222" />
        </svg>
        <Arrows />
      </BarIcon>
      <div className={`w-[119px] h-[20px] flex items-center pl-[8px] text-[10px] text-[#111] ${lightPill}`}>Sverchok</div>
      <BarIcon w={20} cls={lightPill}><Plus /></BarIcon>
      <BarIcon w={20} cls={`rounded-r-[5px] ${lightPill}`}><Cross /></BarIcon>
      <span className="w-[6px]" />
      <BarIcon w={31} cls={`rounded-l-[5px] gap-[2px] ${darkPill}`}>
        <SceneIcon />
        <Arrows />
      </BarIcon>
      <div className={`w-[120px] h-[20px] flex items-center pl-[8px] text-[10px] text-[#111] ${lightPill}`}>Scene</div>
      <BarIcon w={20} cls={lightPill}><Plus /></BarIcon>
      <BarIcon w={21} cls={`rounded-r-[5px] ${lightPill}`}><Cross /></BarIcon>
      <span className="w-[16px]" />
      <div className={`w-[116px] h-[20px] rounded-[5px] flex items-center pl-[8px] pr-[4px] text-[10px] text-[#eee] ${darkPill}`}>
        <span className="flex-1">Cycles Render</span>
        <Arrows />
      </div>
      <span className="w-[18px]" />
      <svg width="16" height="16" viewBox="0 0 16 16" className="shrink-0">
        <path d="M1 9 L7 5 L4 3 H9 A6 5.5 0 1 1 3.5 11 Z" fill="#e8812a" stroke="#222" strokeWidth="0.6" />
        <circle cx="9.5" cy="8.5" r="3.6" fill="#fff" />
        <circle cx="9.5" cy="8.5" r="2" fill="#3b78c8" />
      </svg>
      <span className="w-[10px]" />
      <span className="text-[10px] text-[#111] whitespace-nowrap">v2.79 | Verts:0 | Faces:0 | Tris:0 | Objects:0/2 | Lamps:0/1 | Mem:28.89M</span>
    </div>
  );
}

export default function App() {
  return (
    <div className="w-[1920px] h-[1017px] flex flex-col overflow-hidden bg-[#222] font-['DejaVu_Sans',sans-serif]">
      <TopBar />
      <div className="flex-1 flex min-h-0">
        <div className="w-[1015px] flex flex-col">
          <NodeEditor />
          <NodeHeader />
        </div>
        <div className="w-[2px] bg-[#2a2a2a]" />
        <div className="w-[813px] flex flex-col">
          <Viewport />
          <ViewHeader />
        </div>
        <div className="w-[90px] flex flex-col overflow-hidden">
          <Properties />
          <Timeline />
          <TimelineHeader />
        </div>
      </div>
    </div>
  );
}
